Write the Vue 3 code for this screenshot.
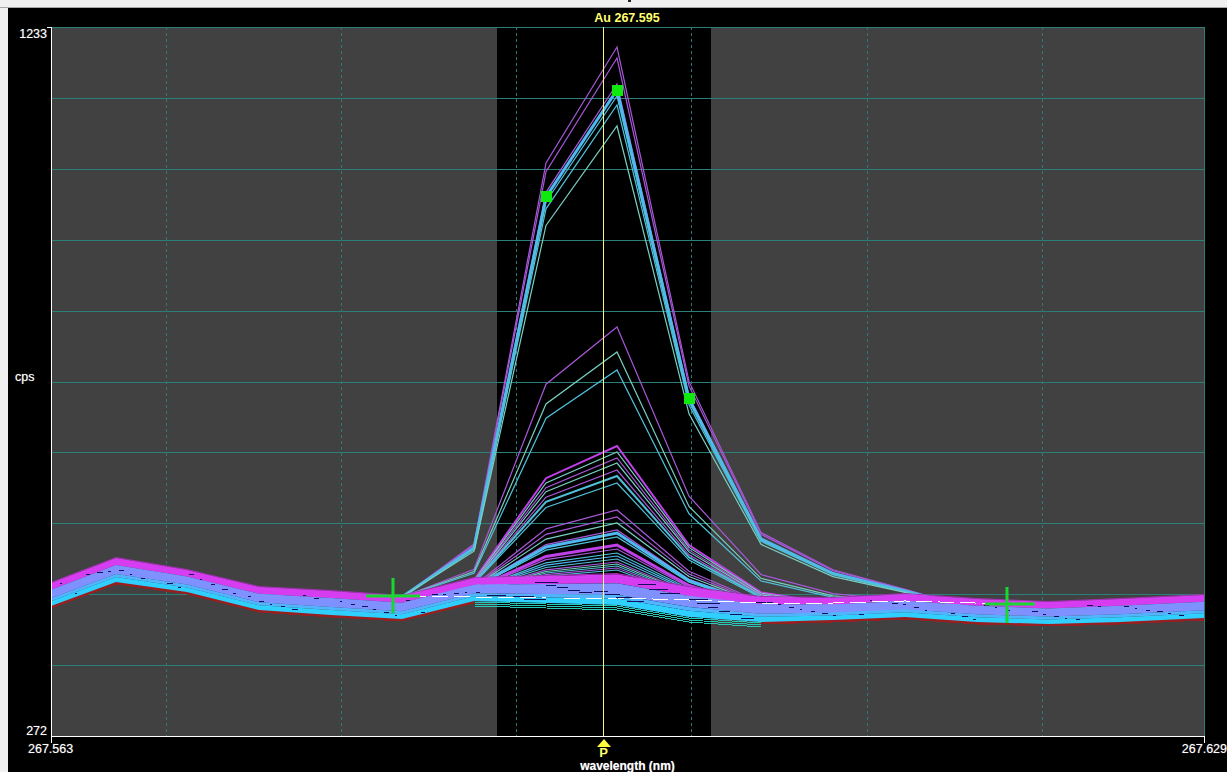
<script setup>
// sample positions along the wavelength axis, in page pixels
const xs = [51, 116, 187, 259, 331, 402, 474, 546, 617, 689, 761, 833, 905, 977, 1048, 1120, 1204]
const bandTop = [582, 557, 569, 586, 590, 595, 577, 575, 573, 586, 596, 597, 593, 598, 601, 598, 594]
const bandBottom = [606, 582, 592, 610, 615, 619, 601, 603, 605, 617, 622, 620, 617, 622, 624, 622, 618]
const scanBase = [0, 0, 0, 0, 0, 597, 593, 592, 590, 604, 614, 616, 611, 610, 0, 0, 0]
const shape = [0, 0, 0, 0, 0, 0, 0.09, 0.79, 1, 0.41, 0.15, 0.085, 0.04, 0, 0, 0, 0]

const hLines = [98, 169, 240, 311, 382, 452, 523, 594, 665]
const vLines = [166, 341, 516, 691, 867, 1042]
const peakX = 603

const lerpY = (t, i) => bandTop[i] + (bandBottom[i] - bandTop[i]) * t
const toPoints = (fn, from = 0, to = xs.length - 1) => {
  const out = []
  for (let i = from; i <= to; i++) out.push(`${xs[i]},${fn(i).toFixed(1)}`)
  return out.join(' ')
}

const bands = [
  { from: 0, to: 0.04, color: '#a030b0' },
  { from: 0.04, to: 0.32, color: '#d63cf0' },
  { from: 0.32, to: 0.68, color: '#7f90ff' },
  { from: 0.68, to: 0.8, color: '#52b4ff' },
  { from: 0.8, to: 1, color: '#2fd0ff' }
].map((b) => {
  const upper = xs.map((x, i) => `${x},${lerpY(b.from, i).toFixed(1)}`)
  const lower = xs.map((x, i) => `${x},${lerpY(b.to, i).toFixed(1)}`).reverse()
  return { color: b.color, points: upper.concat(lower).join(' ') }
})

const P = '#a858d8'
const C = '#50c0d8'
const L = '#78d0c0'
const B = '#50b8f0'
const M = '#c040e8'

// each scan: y at the peak, colour, stroke width
const scans = [
  [47, P, 1.2], [58, P, 1.2], [84, P, 1.2], [90, B, 3], [96, C, 1.2], [105, C, 1.2], [126, L, 1.2],
  [327, P, 1.2], [352, L, 1.2], [370, C, 1.2],
  [446, M, 2], [452, L, 1.2], [458, P, 1.2], [463, L, 1.2], [470, P, 1.2], [476, C, 2], [483, C, 1.2],
  [510, P, 1.2], [517, P, 1.2], [523, L, 1.2], [530, P, 1.2], [533, B, 3], [537, C, 1.2], [545, M, 3], [549, P, 1.2], [553, C, 1.2],
  [556, B, 1.2], [559, C, 1.2], [562, P, 1.2], [564, L, 1.2], [566, C, 1.2], [568, P, 1.2], [570, C, 1.2]
].map(([peak, color, width]) => {
  const amp = 590 - peak
  return { color, width, points: toPoints((i) => scanBase[i] - amp * shape[i], 5, 13) }
})

const lowerLines = [1, 3, 5].map((d) => toPoints((i) => bandBottom[i] + d, 6, 10))

// small dark dropouts in the band, same pattern each time
const streaks = []
for (let i = 0; i < 90; i++) {
  const x = 60 + ((i * 173) % 1130)
  const idx = xs.findIndex((v) => v > x) - 1
  const k = (x - xs[idx]) / (xs[idx + 1] - xs[idx])
  const t = 0.2 + ((i * 37) % 70) / 100
  const y = lerpY(t, idx) * (1 - k) + lerpY(t, idx + 1) * k
  const inPeak = x > 480 && x < 760
  streaks.push({ x, y: Math.round(y), len: inPeak ? 10 + (i % 14) : 2 + (i % 5) })
}

const redLeft = toPoints((i) => bandBottom[i] + 1, 0, 6)
const redRight = toPoints((i) => bandBottom[i] + 1, 10, 16)
const whiteLine = '410,596 474,597 546,598 617,598 689,600 761,603 833,603 905,601 1010,604'

const squares = [
  { x: 546, y: 196 },
  { x: 617, y: 90 },
  { x: 689, y: 398 }
]
const crosses = [
  { x: 393, y: 596, x1: 366, x2: 420, y1: 578, y2: 613 },
  { x: 1007, y: 604, x1: 985, x2: 1035, y1: 587, y2: 623 }
]
</script>

<template>
  <div class="window">
    <div class="top-strip"><span class="top-mark"></span></div>
    <div class="panel">
      <div class="title">Au 267.595</div>

      <div class="y-axis">
        <span class="y-value">1233</span>
        <span class="y-unit">cps</span>
        <span class="y-value">272</span>
      </div>

      <svg class="plot" width="1154" height="710" viewBox="51 27 1154 710">
        <rect x="51" y="27" width="1153" height="709" fill="#414141" />
        <rect x="497" y="27" width="214" height="709" fill="#000" />

        <g class="grid">
          <line x1="51" y1="27.5" x2="1204" y2="27.5" />
          <line v-for="y in hLines" :key="y" x1="51" :y1="y + 0.5" x2="1204" :y2="y + 0.5" />
          <line x1="1204.5" y1="27" x2="1204.5" y2="736" />
          <line v-for="x in vLines" :key="x" class="dashed" :x1="x + 0.5" y1="27" :x2="x + 0.5" y2="736" />
        </g>

        <polyline
          v-for="(s, i) in scans"
          :key="i"
          class="scan"
          :points="s.points"
          :stroke="s.color"
          :stroke-width="s.width"
        />

        <polyline class="crisp" :points="redLeft" stroke="#962020" stroke-width="3" />
        <polyline class="crisp" :points="redRight" stroke="#962020" stroke-width="3" />
        <polyline v-for="(pts, i) in lowerLines" :key="'low' + i" class="crisp" :points="pts" stroke="#28c8b8" stroke-width="1" />
        <polygon v-for="b in bands" :key="b.color" :points="b.points" :fill="b.color" />

        <rect
          v-for="(d, i) in streaks"
          :key="'st' + i"
          :x="d.x"
          :y="d.y"
          :width="d.len"
          height="1"
          fill="#10105a"
        />
        <polyline class="crisp white-dash" :points="whiteLine" />

        <line class="peak-line" :x1="peakX + 0.5" y1="27" :x2="peakX + 0.5" y2="736" />

        <g v-for="c in crosses" :key="c.x" class="cross">
          <line :x1="c.x1" :y1="c.y" :x2="c.x2" :y2="c.y" />
          <line :x1="c.x" :y1="c.y1" :x2="c.x" :y2="c.y2" />
        </g>
        <rect v-for="s in squares" :key="s.x" :x="s.x - 5" :y="s.y - 5" width="11" height="11" fill="#0eea0e" />

        <g class="axis">
          <line x1="47" y1="27.5" x2="51" y2="27.5" />
          <line x1="51.5" y1="27" x2="51.5" y2="743" />
          <line x1="51" y1="736.5" x2="1204" y2="736.5" />
          <line x1="1204.5" y1="736" x2="1204.5" y2="743" />
        </g>
      </svg>

      <div class="x-axis">
        <div class="x-values">
          <span>267.563</span>
          <span>267.629</span>
        </div>
        <div class="marker" :style="{ left: peakX - 51 + 'px' }">
          <svg width="14" height="8" viewBox="0 0 14 8"><polygon points="7,0 14,8 0,8" fill="#ffff40" /></svg>
          <span>P</span>
        </div>
        <div class="x-title">wavelength (nm)</div>
      </div>
    </div>
  </div>
</template>

<style scoped>
.window {
  width: 1227px;
  height: 772px;
  display: flex;
  flex-direction: column;
  background: #f0f0f0;
  overflow: hidden;
  font-family: "Liberation Sans", Arial, sans-serif;
}

.top-strip {
  height: 7px;
  flex: none;
  padding-left: 628px;
  border-bottom: 1px solid #a8a8a8;
  box-sizing: content-box;
}

.top-mark {
  display: block;
  width: 3px;
  height: 2px;
  background: #222;
}

.panel {
  flex: 1;
  margin-left: 8px;
  background: #000;
  display: grid;
  grid-template-columns: 43px 1154px 22px;
  grid-template-rows: 19px 710px 1fr;
  color: #fff;
  font-size: 12.5px;
  text-shadow: 0 0 1px rgba(255, 255, 255, 0.5);
}

.title {
  grid-column: 2;
  grid-row: 1;
  padding-right: 2px;
  text-align: center;
  color: #ffff70;
  font-weight: bold;
  line-height: 20px;
  text-shadow: none;
}

.y-axis {
  grid-column: 1;
  grid-row: 2;
  display: flex;
  flex-direction: column;
  justify-content: space-between;
  line-height: 12px;
  padding-right: 4px;
}

.y-value {
  text-align: right;
}

.y-value:first-child {
  margin-top: 1px;
}

.y-unit {
  padding-left: 7px;
  margin-bottom: 12px;
}

.plot {
  grid-column: 2;
  grid-row: 2;
  display: block;
  overflow: visible;
}

.grid line {
  stroke: #2a8078;
  stroke-width: 1;
}

.grid .dashed {
  stroke: #2a7a78;
  stroke-dasharray: 3 3;
}

.crisp {
  fill: none;
  shape-rendering: crispEdges;
}

.scan {
  fill: none;
}

.white-dash {
  stroke: #fff;
  stroke-width: 1;
  stroke-dasharray: 16 6;
}

.peak-line {
  stroke: #f8f880;
  stroke-width: 1;
}

.cross line {
  stroke: #18d830;
  stroke-width: 3;
}

.axis line {
  stroke: #fff;
  stroke-width: 1;
}

.x-axis {
  grid-column: 2 / span 2;
  grid-row: 3;
  position: relative;
  display: flex;
  flex-direction: column;
}

.x-values {
  display: flex;
  justify-content: space-between;
  margin: 5px 0 0 -23px;
  line-height: 14px;
  white-space: nowrap;
  width: 1199px;
}

.marker {
  position: absolute;
  top: 2px;
  width: 14px;
  margin-left: -6.5px;
  display: flex;
  flex-direction: column;
  align-items: center;
  color: #ffff70;
  font-size: 13px;
  font-weight: bold;
  line-height: 12px;
  text-shadow: none;
}

.marker svg {
  display: block;
}

.x-title {
  width: 1153px;
  margin-top: 3px;
  text-align: center;
  font-size: 12px;
  font-weight: bold;
  line-height: 14px;
}
</style>
